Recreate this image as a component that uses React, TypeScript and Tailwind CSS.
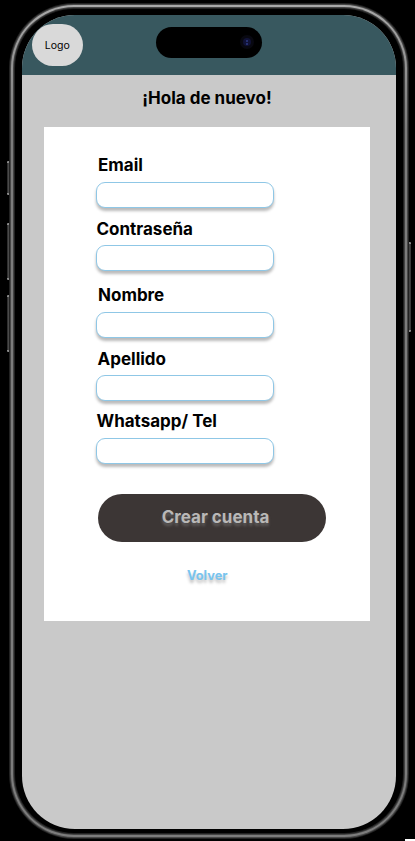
const fields = [
  { label: 'Email', type: 'email', offset: 'h-[63px]', indent: 'pl-[2px] pt-0' },
  { label: 'Contraseña', type: 'password', offset: 'h-[66.5px]', indent: 'pl-[0.5px] pt-[0.5px]' },
  { label: 'Nombre', type: 'text', offset: 'h-[63.5px]', indent: 'pl-[2px] pt-[0.5px]' },
  { label: 'Apellido', type: 'text', offset: 'h-[63px]', indent: 'pl-[1.5px] pt-[0.5px]' },
  { label: 'Whatsapp/ Tel', type: 'tel', offset: 'h-[63px]', indent: 'pl-[0.5px] pt-0' },
];

function SideButtons() {
  const look = 'absolute w-[3px] rounded-[1px] border-y-2 border-y-[#8a8a8a] bg-gradient-to-r';
  return (
    <>
      <div className={look + ' left-[7px] top-[161px] h-[34px] from-[#222] to-[#777]'} />
      <div className={look + ' left-[7px] top-[223px] h-[57px] from-[#222] to-[#777]'} />
      <div className={look + ' left-[7px] top-[295px] h-[57px] from-[#222] to-[#777]'} />
      <div className={look + ' left-[408px] top-[242px] h-[90px] from-[#555] to-[#333]'} />
    </>
  );
}

function Header() {
  return (
    <header className="flex h-[60px] shrink-0 items-start bg-[#38585f] pl-[9.5px] pt-[9px]">
      <div className="flex h-[42px] w-[51.5px] items-center justify-center rounded-[21px] bg-[#d9d9d9] pt-[2px] text-[10.5px]">
        Logo
      </div>
      <div className="ml-[73px] mt-[3px] flex h-[30.5px] w-[106px] items-center justify-end rounded-full bg-black pr-[8px]">
        <div className="flex h-[14px] w-[14px] items-center justify-center rounded-full bg-[#080810]">
          <div className="flex h-[8px] w-[8px] flex-col items-center justify-center gap-[1px] rounded-full bg-[#101236]">
            <div className="h-[2px] w-[2px] rounded-full bg-[#2c3a85]" />
            <div className="h-[2px] w-[2px] rounded-full bg-[#2c3a85]" />
          </div>
        </div>
      </div>
    </header>
  );
}

export default function App() {
  return (
    <div className="relative h-[841px] w-[415px] overflow-hidden bg-black pl-[9px] pt-[3px] font-['Inter',sans-serif] text-black">
      <SideButtons />
      <div className="relative h-[836px] w-[400px] rounded-[65px] bg-[#222] p-px">
        <div className="h-full rounded-[64px] bg-[#484848] p-px">
          <div className="h-full rounded-[63px] bg-gradient-to-b from-[#a8a8a8] via-[#7c7c7c] via-15% to-[#7c7c7c] p-[2px]">
            <div className="h-full rounded-[61px] bg-[#444] p-px">
              <div className="h-full rounded-[60px] bg-[#222] p-px">
                <div className="h-full rounded-[59px] bg-black px-[7px] pb-[4px] pt-[6px]">
                  <main className="flex h-[814px] w-[374px] flex-col overflow-hidden rounded-[53px] bg-[#c9c9c9]">
                    <Header />
                    <h1 className="mt-[12px] h-[40px] pr-[4px] text-center text-[17px] font-bold leading-[22px]">
                      ¡Hola de nuevo!
                    </h1>
                    <form className="ml-[22px] flex h-[494px] w-[325.5px] flex-col bg-white pl-[52px] pt-[28px]">
                      {fields.map((f) => (
                        <label key={f.label} className={'block shrink-0 ' + f.offset}>
                          <span className={'block h-[27px] text-[17px] font-bold leading-[21px] ' + f.indent}>{f.label}</span>
                          <input
                            type={f.type}
                            className="block h-[26px] w-[178px] rounded-[9px] border border-[#8fc7e6] bg-white shadow-[0_3px_3px_rgba(0,0,0,0.27)] outline-none"
                          />
                        </label>
                      ))}
                      <button
                        type="button"
                        className="ml-[2px] mt-[20px] h-[48px] w-[228px] shrink-0 rounded-full bg-[#3c3635] pb-[1px] pl-[7px] text-[17px] font-bold text-[#b9b8b7] [text-shadow:0_3px_3px_rgba(160,160,160,0.4)]"
                      >
                        Crear cuenta
                      </button>
                      <a className="ml-[91px] mt-[25px] text-[12.8px] font-bold leading-[17px] text-[#78c4ee] [text-shadow:0_3px_3px_rgba(0,0,0,0.25)]">
                        Volver
                      </a>
                    </form>
                  </main>
                </div>
              </div>
            </div>
          </div>
        </div>
      </div>
      <div className="absolute left-[405px] top-[839px] h-[2px] w-[10px] bg-white" />
    </div>
  );
}
